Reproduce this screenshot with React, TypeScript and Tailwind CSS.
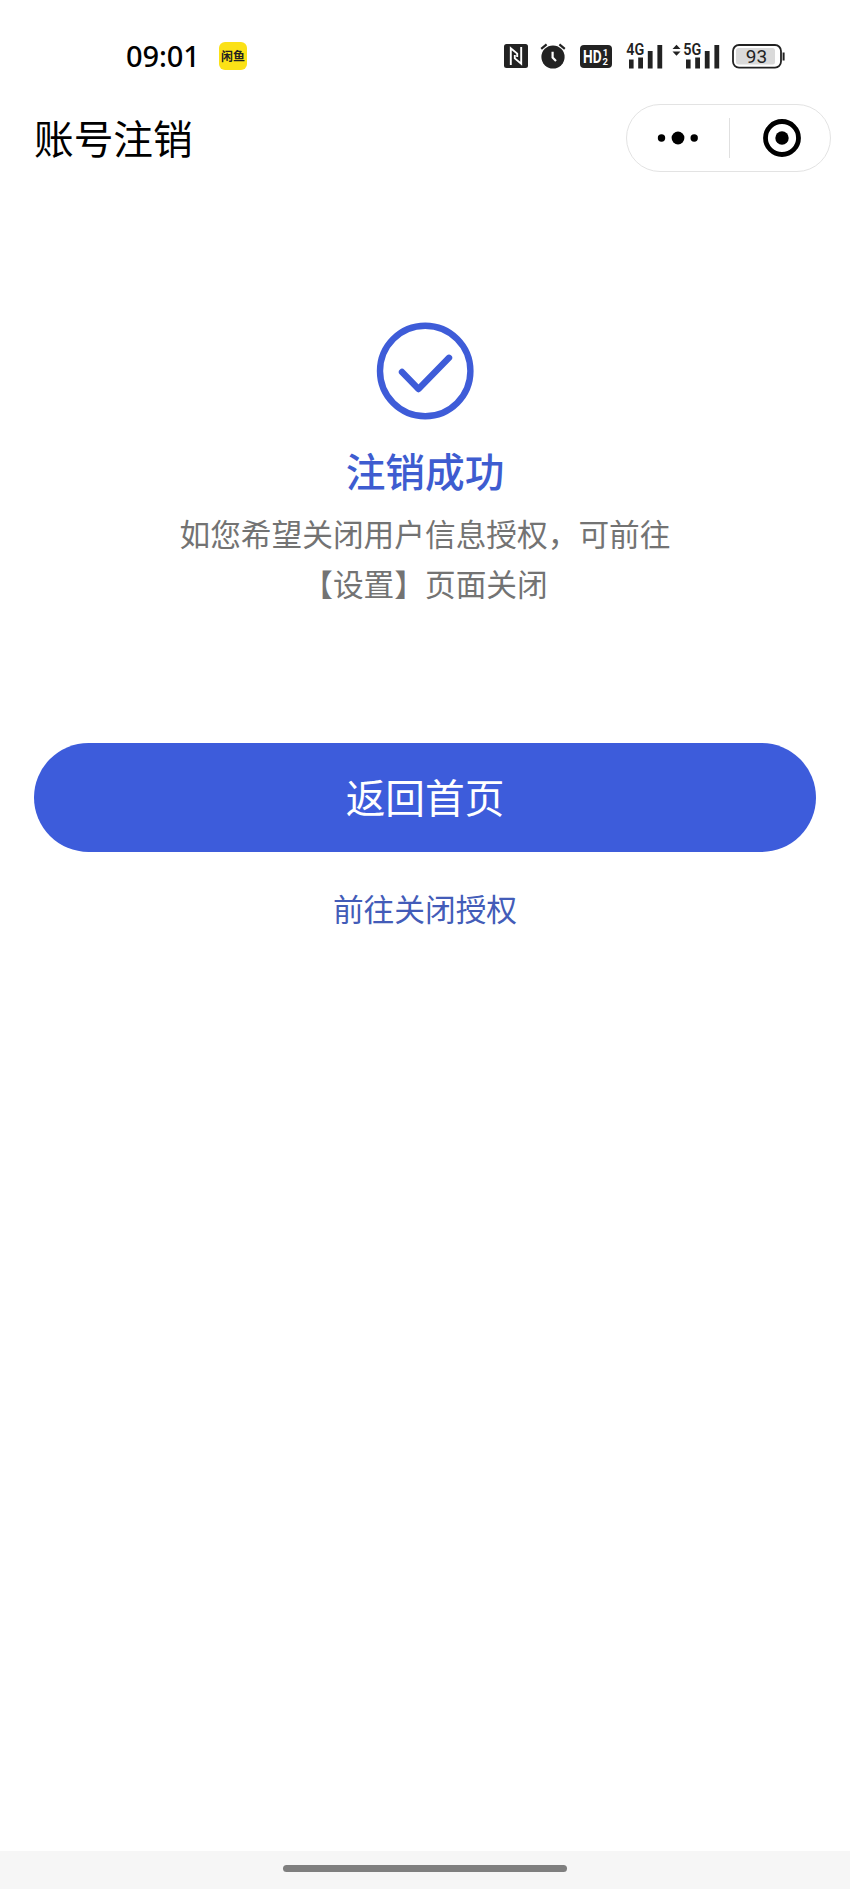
const INK = '#222222';

function NfcIcon() {
  return (
    <svg width="24" height="24" viewBox="0 0 24 24">
      <rect x="0" y="0" width="24" height="24" rx="2.5" fill={INK} />
      <path d="M6.8 21V4.2L13.2 9.6V13" fill="none" stroke="#fff" strokeWidth="1.9" />
      <path d="M17.2 3V19.8L10.8 14.4V11" fill="none" stroke="#fff" strokeWidth="1.9" />
    </svg>
  );
}

function AlarmIcon() {
  return (
    <svg width="26" height="26" viewBox="0 0 26 26">
      <circle cx="13" cy="14" r="11.6" fill={INK} />
      <path d="M1.2 5.8L6.6 1.4M24.8 5.8L19.4 1.4" stroke={INK} strokeWidth="2.2" />
      <path d="M12.6 8.8V14.6L16 18" fill="none" stroke="#fff" strokeWidth="2.2" />
    </svg>
  );
}

function HdIcon() {
  return (
    <svg
      className="overflow-visible"
      width="32"
      height="23"
      viewBox="0 0 32 23"
      fontFamily="Roboto, sans-serif"
      fontWeight="700"
    >
      <rect x="0" y="0" width="32" height="23" rx="4" fill={INK} />
      <text x="3" y="17.6" fontSize="17.5" fill="#fff" textLength="18.6" lengthAdjust="spacingAndGlyphs">HD</text>
      <text x="22.8" y="10.6" fontSize="9.5" fill="#fff">1</text>
      <text x="22.6" y="20.4" fontSize="9.5" fill="#fff">2</text>
    </svg>
  );
}

function SignalIcon({ label, arrows = false }: { label: string; arrows?: boolean }) {
  return (
    <svg
      className="overflow-visible"
      width={arrows ? 48 : 36}
      height="25"
      viewBox={arrows ? '-12 0 48 25' : '0 0 36 25'}
    >
      {arrows && <path d="M-11.5 5L-7.5 0.8L-3.5 5ZM-11.5 7.5L-7.5 11.7L-3.5 7.5Z" fill={INK} />}
      <text
        x="-0.8"
        y="11.4"
        fontSize="16"
        fontWeight="600"
        fontFamily="Roboto, sans-serif"
        fill={INK}
        textLength="18"
        lengthAdjust="spacingAndGlyphs"
      >
        {label}
      </text>
      <path d="M2 15.5h4.6v9h-4.6zM11.2 13.5h4.8v11h-4.8zM20.8 7h4.8v17.5h-4.8zM30.4 1h4.8v23.5h-4.8z" fill={INK} />
    </svg>
  );
}

function BatteryIcon() {
  return (
    <svg width="53" height="25" viewBox="0 0 53 25">
      <rect x="1" y="1" width="48" height="22.6" rx="6" fill="#fff" stroke={INK} strokeWidth="1.8" />
      <rect x="4" y="4" width="39" height="16.6" rx="2.5" fill="#dadada" />
      <path d="M51.6 8.5v8" stroke={INK} strokeWidth="2" />
      <text x="24.4" y="18.8" textAnchor="middle" fontSize="19" fontFamily="Roboto, sans-serif" fill={INK}>93</text>
    </svg>
  );
}

function StatusBar() {
  return (
    <div className="flex h-[92px] items-center pl-[126px]">
      <span className="mt-[18px] w-[72px] font-['Noto_Sans'] text-[29px] font-medium leading-none tracking-[-0.1px] text-black">
        09:01
      </span>
      <span className="ml-[21px] mt-[20px] flex size-[28px] items-center justify-center rounded-[6px] bg-[#fbe117] text-[12px] font-bold leading-none text-[#222222]">
        闲鱼
      </span>
      <div className="ml-auto mr-[65px] mt-[20px] flex items-center">
        <NfcIcon />
        <div className="ml-[12px]"><AlarmIcon /></div>
        <div className="ml-[14px]"><HdIcon /></div>
        <div className="ml-[15px]"><SignalIcon label="4G" /></div>
        <div className="ml-[9px]"><SignalIcon label="5G" arrows /></div>
        <div className="ml-[12px]"><BatteryIcon /></div>
      </div>
    </div>
  );
}

function Capsule() {
  return (
    <div className="flex h-[68px] w-[205px] items-center rounded-full border border-[#e3e3e3] bg-white">
      <button className="flex w-[102px] items-center justify-center">
        <svg width="42" height="14" viewBox="0 0 42 14">
          <circle cx="4.5" cy="7" r="3.7" />
          <circle cx="21" cy="7" r="6.4" />
          <circle cx="37.2" cy="7" r="3.7" />
        </svg>
      </button>
      <div className="h-[40px] w-px bg-[#e0e0e0]" />
      <button className="flex flex-1 items-center justify-center pl-[4px]">
        <svg width="38" height="38" viewBox="0 0 38 38">
          <circle cx="19" cy="19" r="16.5" fill="none" stroke="#000" strokeWidth="4.8" />
          <circle cx="19" cy="19" r="6.7" />
        </svg>
      </button>
    </div>
  );
}

export default function App() {
  return (
    <div className="flex h-[1889px] w-[850px] flex-col bg-white font-['Noto_Sans_CJK_SC',sans-serif]">
      <StatusBar />

      <header className="flex h-[92px] items-center justify-between pl-[34px] pr-[19px]">
        <h1 className="-mt-[3px] text-[39.7px] leading-none text-black">账号注销</h1>
        <Capsule />
      </header>

      <main className="flex flex-1 flex-col items-center px-[34px] pt-[138px]">
        <svg width="98" height="98" viewBox="0 0 98 98" fill="none" stroke="#3e5cd8" strokeWidth="6.4">
          <circle cx="49.2" cy="49" r="45.2" />
          <path d="M26 50L42.5 67L73 35.8" strokeLinecap="round" strokeLinejoin="round" />
        </svg>
        <h2 className="mt-[30px] text-[39.7px] font-medium leading-[40px] text-[#3e5cd0]">注销成功</h2>
        <p className="mt-[18px] text-center text-[30.7px] leading-[49.5px] text-[#737373]">
          如您希望关闭用户信息授权，可前往
          <br />
          【设置】页面关闭
        </p>
        <button className="mt-[136px] h-[109px] w-full rounded-full bg-[#3d5cdb] pb-[3px] text-[39.7px] leading-none text-white">
          返回首页
        </button>
        <button className="mt-[40px] text-[30.7px] leading-[31px] text-[#435cb8]">前往关闭授权</button>
      </main>

      <footer className="flex h-[38px] justify-center bg-[#f6f6f6] pt-[14px]">
        <div className="h-[7px] w-[284px] rounded-full bg-[#7f7f7f]" />
      </footer>
    </div>
  );
}
